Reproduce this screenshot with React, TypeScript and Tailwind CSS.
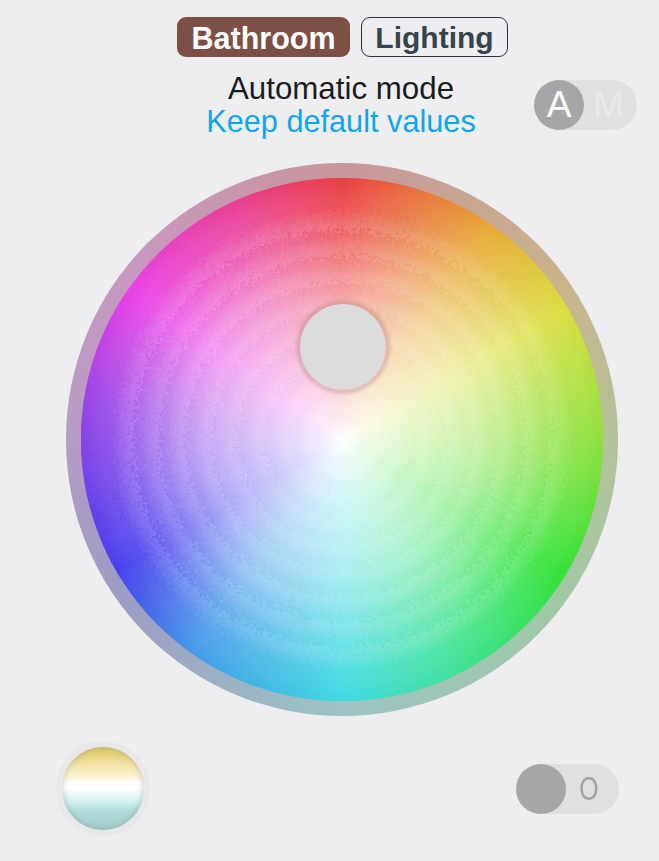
const size = 522;
const bandCount = 10;
const bandStops: { offset: string; opacity: number }[] = [];
for (let i = 0; i < bandCount; i++) {
  const start = (i / bandCount) * 100;
  const end = ((i + 1) / bandCount) * 100;
  const strength = i === bandCount - 1 ? 0.04 : 0.16;
  bandStops.push({ offset: `${start}%`, opacity: strength });
  bandStops.push({ offset: `${end}%`, opacity: 0 });
}

function Bands() {
  return (
    <svg className="absolute inset-0" width={size} height={size} viewBox={`0 0 ${size} ${size}`}>
      <defs>
        <radialGradient id="bands" cx="50%" cy="50%" r="50%">
          {bandStops.map((s, i) => (
            <stop key={i} offset={s.offset} stopColor="#ffffff" stopOpacity={s.opacity} />
          ))}
        </radialGradient>
        <filter id="dither" x="0" y="0" width="100%" height="100%">
          <feTurbulence type="fractalNoise" baseFrequency="0.28" numOctaves="3" seed="4" result="n" />
          <feDisplacementMap in="SourceGraphic" in2="n" scale="26" xChannelSelector="R" yChannelSelector="G" />
        </filter>
      </defs>
      <rect width={size} height={size} fill="url(#bands)" filter="url(#dither)" />
    </svg>
  );
}

export default function App() {
  return (
    <div className="w-[659px] h-[861px] bg-[#eeeef0] font-['Liberation_Sans',Arial,sans-serif] overflow-hidden flex flex-col">
      <div className="flex pl-[177px] pt-[17px] gap-[11px]">
        <div className="w-[173px] h-[40px] rounded-[9px] bg-[#7c5045] text-white font-bold text-[30.5px] leading-[42px] text-center">Bathroom</div>
        <div className="w-[147px] h-[40px] rounded-[9px] border border-[#2c3338] text-[#36444d] font-bold text-[30px] leading-[40px] text-center">Lighting</div>
      </div>
      <div className="flex items-center mt-[15px]">
        <div className="ml-[187px] w-[308px] text-center text-[30.7px] leading-[33px]">
          <div className="text-[#1c1c1e] text-[31.3px]">Automatic mode</div>
          <div className="text-[#11a5f0]">Keep default values</div>
        </div>
        <div className="ml-[39px] w-[103px] h-[50px] rounded-full bg-[#e0e0e2] flex items-center">
          <div className="w-[50px] h-[50px] rounded-full bg-[#a6a6a8] text-white text-[37px] leading-[50px] text-center">A</div>
          <div className="ml-[9px] text-[#e8e8ea] text-[37px] leading-[50px]">M</div>
        </div>
      </div>
      <div className="ml-[66px] mt-[25px] w-[552px] h-[553px] rounded-full p-[15px] bg-[conic-gradient(#c8969c,#c9b48a_55deg,#b0c49c_95deg,#a0c8a4_130deg,#9cc4c4_180deg,#9c9cc4_235deg,#b89cc4_275deg,#c898c0_310deg,#c8969c)]">
        <div className="relative w-full h-full rounded-full overflow-hidden saturate-[1.1] bg-[conic-gradient(#d82226,#dc9c20_35deg,#d4d830_60deg,#70d828_95deg,#1cd824_122deg,#2cd890_155deg,#2cd0d8_180deg,#2c88dc_215deg,#2820d8_240deg,#8028d4_278deg,#d824d4_305deg,#d82480_335deg,#d82226)]">
          <div className="absolute inset-0 rounded-full bg-[radial-gradient(circle_at_50%_50%,#ffffff_0%,rgba(255,255,255,0.9)_6%,rgba(255,255,255,0.76)_18%,rgba(255,255,255,0.62)_34%,rgba(255,255,255,0.5)_43%,rgba(255,255,255,0.36)_52%,rgba(255,255,255,0.22)_62%,rgba(255,255,255,0.1)_75%,rgba(255,255,255,0)_88%)]"></div>
          <Bands />
          <div className="absolute left-[219px] top-[126px] w-[86px] h-[86px] rounded-full bg-[#dcdcdc] shadow-[0_0_3px_4px_rgba(170,120,120,0.3)]"></div>
        </div>
      </div>
      <div className="flex items-center justify-between pl-[56px] pr-[40px] mt-[25px]">
        <div className="w-[94px] h-[95px] rounded-full bg-[#e8e8ea] flex items-center justify-center">
          <div className="w-[82px] h-[83px] rounded-full bg-[linear-gradient(#dcc860_0%,#ecd98c_14%,#f6e6b0_24%,#faf2cc_34%,#fdf9e8_40%,#ffffff_43%,#ffffff_50%,#e2f6f6_59%,#cdeeee_68%,#b2dedd_76%,#a8d4d2_88%,#a4cfcd_100%)] shadow-[inset_0_0_6px_rgba(140,140,140,0.5)]"></div>
        </div>
        <div className="w-[103px] h-[50px] rounded-full bg-[#e0e0e2] flex items-center">
          <div className="w-[50px] h-[50px] rounded-full bg-[#a6a6a8]"></div>
          <div className="ml-[10px] w-[26px] text-center text-[#a3a3a5] text-[33px] leading-[50px] scale-x-75">O</div>
        </div>
      </div>
    </div>
  );
}
